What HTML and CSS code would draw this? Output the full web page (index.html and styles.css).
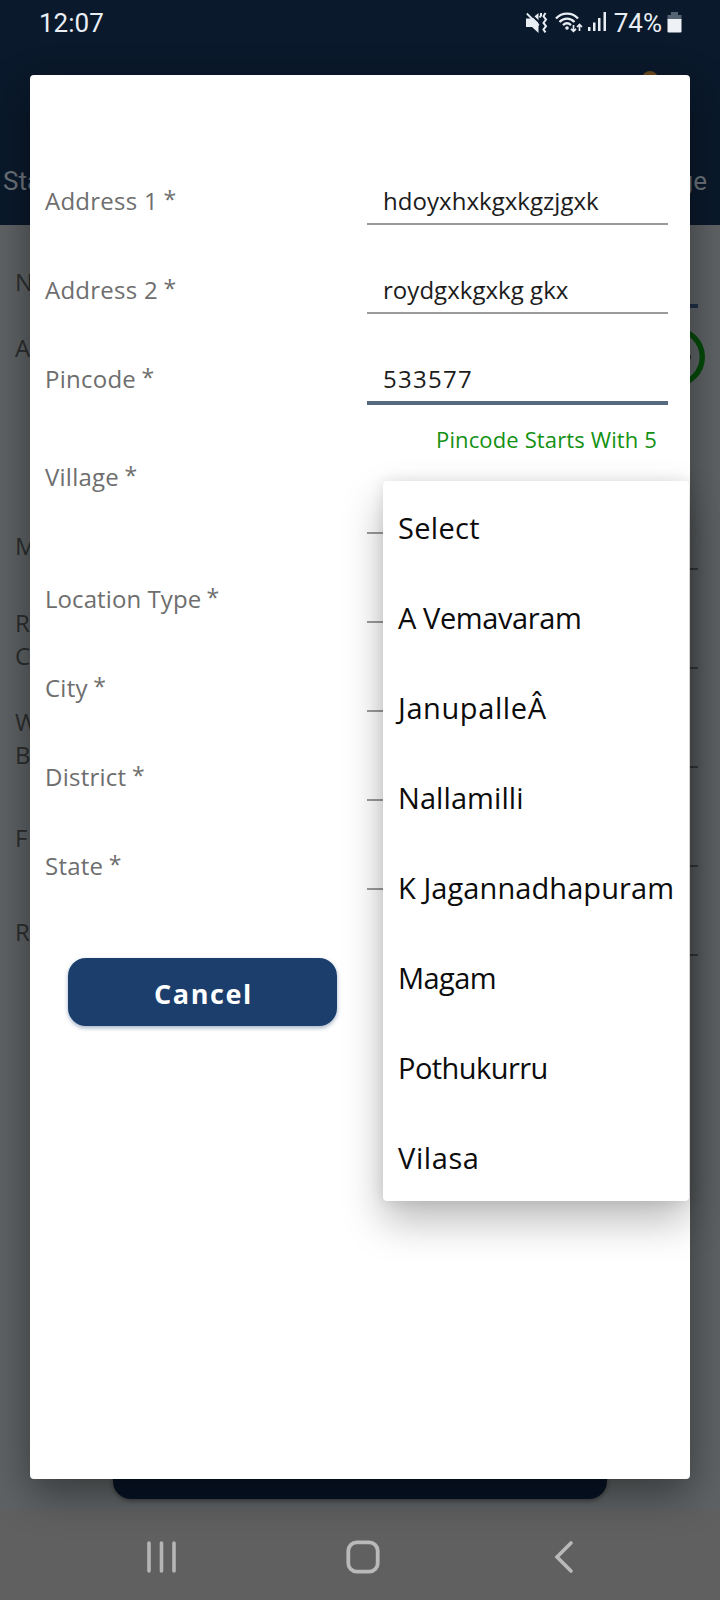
FILE: index.html
```html
<!DOCTYPE html>
<html lang="en">
<head>
<meta charset="utf-8">
<title>Address</title>
<link rel="stylesheet" href="styles.css">
</head>
<body>
<div class="screen">
  <div class="page">
    <header class="appbar">
      <span class="clock">12:07</span>
      <div class="status">
        <svg class="ic-mute" width="22" height="22" viewBox="0 0 22 22" fill="none" stroke="#e9eef5" stroke-width="1.800">
          <path d="M0 6.500h6L12.500 1v20L6 15H0z" fill="#e9eef5" stroke="none"/>
          <path d="M2 -.500l12 11.500" stroke="#0a192b" stroke-width="2"/>
          <path d="M.8 1.500l12 12"/>
          <path d="M15 1v2.500l-1.300 2" stroke-width="2"/>
          <path d="M19.500 1l-2 3.300 2.500 3.300-2.500 3.300 2.500 3.300-2.500 3.300 2 2.800" stroke-width="2"/>
        </svg>
        <svg class="ic-wifi" width="28" height="22" viewBox="0 0 28 22" fill="none" stroke="#e9eef5" stroke-width="2.400">
          <path d="M1 6.500c6-6.500 16-6.500 22 0M4.500 10c4.500-4.500 10.500-4.500 15 0M8 13.200c2.500-2.300 5.500-2.300 8 0"/>
          <circle cx="12" cy="16" r="1.800" fill="#e9eef5" stroke="none"/>
          <path d="M18.500 13v6M16 16.800l2.500 2.500 2.500-2.500M24.500 19v-6M22 15l2.500-2.500 2.500 2.500" stroke-width="1.700"/>
        </svg>
        <svg class="ic-signal" width="19" height="20" viewBox="0 0 19 20" fill="#e9eef5">
          <rect x="0" y="15" width="2.500" height="4"/><rect x="5" y="10.500" width="2.500" height="8.500"/><rect x="10" y="6" width="2.500" height="13"/><rect x="15.500" y="0" width="2.500" height="19"/>
        </svg>
        <span class="percent">74%</span>
        <svg class="ic-battery" width="15" height="21" viewBox="0 0 15 21">
          <path d="M4 0h7v3h3.500v5H.5V3H4z" fill="#566373"/><path d="M.5 7h14v12.500q0 1-1 1h-12q-1 0-1-1z" fill="#eef1f5"/>
        </svg>
      </div>
      <span class="bell-dot"></span>
      <span class="tab tab-start">Sta</span>
      <span class="tab tab-end">ge</span>
    </header>
    <main class="behind">
      <div class="brow b1"><span>N</span><i class="rule focus"></i></div>
      <div class="brow b2"><span>A</span><svg class="ring" width="60" height="60" viewBox="0 0 60 60"><circle cx="30" cy="30" r="27.300" fill="none" stroke="#04490a" stroke-width="5.400"/><circle cx="43" cy="30" r="3" fill="#222628"/></svg></div>
      <div class="brow b3"><span>M</span><i class="rule"></i></div>
      <div class="brow b4"><span>R<br>C</span><i class="rule"></i></div>
      <div class="brow b5"><span>W<br>B</span><i class="rule"></i></div>
      <div class="brow b6"><span>F</span><i class="rule"></i></div>
      <div class="brow b7"><span>R</span><i class="rule"></i></div>
      <div class="submit"></div>
    </main>
    <div class="navshade"></div>
  </div>

  <section class="dialog">
    <div class="row"><label>Address 1 <b class="req">*</b></label><div class="field">hdoyxhxkgxkgzjgxk</div></div>
    <div class="row"><label>Address 2 <b class="req">*</b></label><div class="field">roydgxkgxkg gkx</div></div>
    <div class="row row-focus"><label>Pincode <b class="req">*</b></label><div class="field digits">533577</div></div>
    <div class="hint">Pincode Starts With 5</div>
    <div class="row row-village"><label>Village <b class="req">*</b></label><div class="field"></div></div>
    <div class="row"><label class="snug">Location Type <b class="req">*</b></label><div class="field"></div></div>
    <div class="row"><label>City <b class="req">*</b></label><div class="field"></div></div>
    <div class="row"><label>District <b class="req">*</b></label><div class="field"></div></div>
    <div class="row"><label>State <b class="req">*</b></label><div class="field"></div></div>
    <div class="actions"><button class="btn">Cancel</button><button class="btn btn-flat"></button></div>
  </section>

  <ul class="menu">
    <li class="roomy">Select</li>
    <li class="tight">A Vemavaram</li>
    <li class="loose">JanupalleÂ</li>
    <li class="even">Nallamilli</li>
    <li class="even">K Jagannadhapuram</li>
    <li class="tighter">Magam</li>
    <li class="tighter">Pothukurru</li>
    <li class="loose">Vilasa</li>
  </ul>

  <nav class="navbar">
    <svg width="32" height="34" viewBox="0 0 32 34" stroke="#b5b5b5" stroke-width="3.600" stroke-linecap="round"><path d="M3 3v28M15.500 3v28M28 3v28"/></svg>
    <svg class="home" width="34" height="34" viewBox="0 0 34 34" fill="none" stroke="#b9b9b9" stroke-width="3.800"><rect x="2.300" y="2.300" width="29.400" height="29.400" rx="8.500"/></svg>
    <svg width="20" height="34" viewBox="0 0 20 34" fill="none" stroke="#b9b9b9" stroke-width="3.600" stroke-linecap="round"><path d="M17 3L3 17l14 14"/></svg>
  </nav>
</div>
</body>
</html>
```
FILE: styles.css
```css
* { box-sizing: border-box; }
body { margin: 0; font-family: "Open Sans", sans-serif; }
.screen { position: relative; width: 720px; height: 1600px; overflow: hidden; background: #5e6264; }
.page { display: flex; flex-direction: column; height: 1600px; }

.appbar { position: relative; height: 225px; background: #0a192b; color: #e9eef5; display: flex; justify-content: space-between; align-items: flex-start; padding: 8px 38px 0 39px; font-family: Roboto, sans-serif; font-size: 26px; line-height: 30px; }
.status { display: flex; align-items: flex-start; height: 30px; }
.status svg { margin-top: 4px; }
.ic-wifi { margin-left: 7px; }
.ic-signal { margin-left: 5px; }
.percent { margin-left: 7px; }
.ic-battery { margin-left: 5px; }
.bell-dot { position: absolute; left: 642px; top: 71px; width: 16px; height: 16px; border-radius: 50%; background: #6b4a1f; }
.tab { position: absolute; top: 166px; color: #6a727b; }
.tab-start { left: 3px; }
.tab-end { right: 13px; }

.behind { flex: 1; display: flex; flex-direction: column; padding: 0 22px 0 15px; color: #2b2d2e; font-size: 24px; line-height: 33px; }
.brow { display: flex; justify-content: space-between; align-items: flex-end; }
.rule { width: 40px; height: 2px; background: #37393b; }
.rule.focus { height: 4px; background: #1f2f46; }
.b1 { height: 83px; }
.b1 span { padding-bottom: 10px; }
.b2 { height: 79px; margin-right: -7px; }
.b2 span { padding-bottom: 23px; }
.b3 { height: 183px; }
.b4, .b5, .b6 { height: 99px; }
.b7 { height: 89px; }
.b3 span { padding-bottom: 8px; }
.b4 span, .b5 span { margin-bottom: -3px; }
.b6 span { padding-bottom: 13px; }
.b7 span { padding-bottom: 8px; }
.submit { width: 494px; height: 68px; margin: auto 0 11px 98px; border-radius: 18px; background: #071324; box-shadow: 0 2px 4px rgba(0,0,0,.35); }
.navshade { height: 90px; background: #606060; }

.dialog { position: absolute; left: 30px; top: 75px; width: 660px; height: 1404px; padding: 61px 22px 0 16px; border-radius: 4px; background: #fff; box-shadow: 0 14px 40px rgba(0,0,0,.42); display: flex; flex-direction: column; }
.row { display: grid; grid-template-columns: 321px 301px; height: 89px; align-items: end; color: #6e6e6e; font-size: 24px; line-height: 30px; }
.row label { padding-bottom: 9px; margin-left: -1px; letter-spacing: .250px; }
.row .snug { letter-spacing: .08px; }
.req { position: relative; top: -2px; margin-left: -1px; font-size: 23px; line-height: 1; font-weight: 400; }
.field { height: 46px; padding: 0 16px 7px; border-bottom: 2px solid #9b9b9b; display: flex; align-items: flex-end; color: #1c1c1c; letter-spacing: .04px; }
.digits { letter-spacing: 1.280px; }
.row-focus { height: 91px; }
.row-focus .field { border-bottom: 4px solid #566a7f; }
.row-focus label { padding-bottom: 11px; }
.hint { height: 51px; padding: 19px 11px 0 0; text-align: right; color: #149114; font-size: 22px; line-height: 30px; letter-spacing: .13px; }
.row-village { height: 78px; }
.row-village label { align-self: start; padding: 6px 0 0; }
.actions { display: flex; gap: 46px; padding: 68px 0 0 22px; }
.btn { width: 269px; height: 68px; padding: 4px 0 0 2px; border: 0; border-radius: 18px; background: #1b3e6d; color: #fff; font: 700 27px/34px "Open Sans", sans-serif; letter-spacing: 1.600px; box-shadow: 0 2px 4px rgba(27,62,109,.4); }
.btn-flat { background: #eee; box-shadow: none; }

.menu { position: absolute; left: 383px; top: 481px; width: 306px; height: 720px; margin: 0; padding: 0 0 0 15px; list-style: none; border-radius: 4px; background: #fff; box-shadow: 0 20px 40px rgba(0,0,0,.27), 0 0 14px rgba(0,0,0,.1); color: #0c0c0c; font-size: 29px; line-height: 40px; }
.menu li { height: 90px; padding-top: 27px; white-space: nowrap; }
.loose { letter-spacing: .6px; }
.roomy { letter-spacing: .3px; }
.even { letter-spacing: .08px; }
.tight { letter-spacing: -.4px; }
.tighter { letter-spacing: -.55px; }

.navbar { position: absolute; left: 146px; right: 146px; bottom: 26px; display: flex; justify-content: space-between; }
.home { margin-left: -7px; }
```
